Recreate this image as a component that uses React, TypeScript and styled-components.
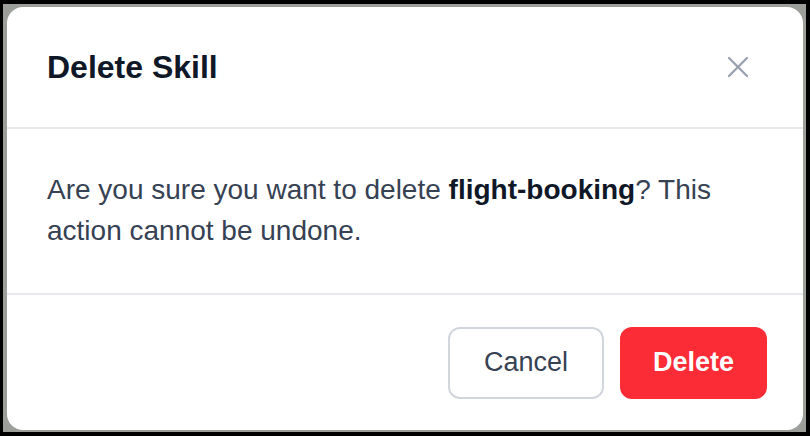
import React from "react";
import styled, { createGlobalStyle } from "styled-components";

const GlobalStyle = createGlobalStyle`
  html, body {
    margin: 0;
    padding: 0;
    background: #000;
  }
  body {
    font-family: "Liberation Sans", Arial, sans-serif;
    -webkit-font-smoothing: antialiased;
  }
  * {
    box-sizing: border-box;
  }
`;

const Frame = styled.div`
  width: 810px;
  height: 436px;
  padding: 4px 4px 4px 3px;
  background: #000;
`;

const Backdrop = styled.div`
  height: 100%;
  padding: 3px 3px 2px 4px;
  background: #9c9e9a;
`;

const Dialog = styled.div`
  height: 100%;
  display: flex;
  flex-direction: column;
  background: #ffffff;
  border-radius: 16px;
  overflow: hidden;
`;

const Header = styled.header`
  height: 122px;
  flex: none;
  display: flex;
  align-items: center;
  justify-content: space-between;
  padding: 0 47px 0 40px;
  border-bottom: 2px solid #e8e9ec;
`;

const Title = styled.h2`
  margin: 0;
  font-size: 32px;
  font-weight: 700;
  color: #101828;
`;

const CloseButton = styled.button`
  width: 36px;
  height: 36px;
  padding: 0;
  border: none;
  background: none;
  color: #99a1af;
  display: flex;
  align-items: center;
  justify-content: center;
  cursor: pointer;
`;

const Body = styled.div`
  padding: 40px;
  height: 166px;
  flex: none;
  border-bottom: 2px solid #e8e9ec;
`;

const Message = styled.p`
  margin: 0;
  font-size: 28px;
  line-height: 41px;
  color: #364153;

  & strong {
    font-weight: 700;
    color: #101828;
  }
`;

const Footer = styled.footer`
  flex: 1;
  display: flex;
  align-items: center;
  justify-content: flex-end;
  gap: 16px;
  padding: 0 36px 0 40px;
`;

const Button = styled.button<{ $danger?: boolean }>`
  height: 72px;
  padding: 0 ${(p) => (p.$danger ? "33px" : "34px")};
  border-radius: 12px;
  font-family: "Liberation Sans", Arial, sans-serif;
  font-size: 27px;
  font-weight: ${(p) => (p.$danger ? 700 : 400)};
  color: ${(p) => (p.$danger ? "#ffffff" : "#364153")};
  background: ${(p) => (p.$danger ? "#fb2c36" : "#ffffff")};
  border: ${(p) => (p.$danger ? "none" : "2px solid #d1d5dc")};
  cursor: pointer;
`;

function CloseIcon() {
  return (
    <svg width="36" height="36" viewBox="0 0 24 24" fill="none" stroke="currentColor" strokeWidth="1.5" strokeLinecap="round" strokeLinejoin="round">
      <path d="M18 6 6 18" />
      <path d="m6 6 12 12" />
    </svg>
  );
}

export default function App() {
  return (
    <>
      <GlobalStyle />
      <Frame>
        <Backdrop>
          <Dialog role="dialog" aria-labelledby="delete-title">
            <Header>
              <Title id="delete-title">Delete Skill</Title>
              <CloseButton aria-label="Close">
                <CloseIcon />
              </CloseButton>
            </Header>
            <Body>
              <Message>
                Are you sure you want to delete <strong>flight-booking</strong>? This action cannot be undone.
              </Message>
            </Body>
            <Footer>
              <Button>Cancel</Button>
              <Button $danger>Delete</Button>
            </Footer>
          </Dialog>
        </Backdrop>
      </Frame>
    </>
  );
}
